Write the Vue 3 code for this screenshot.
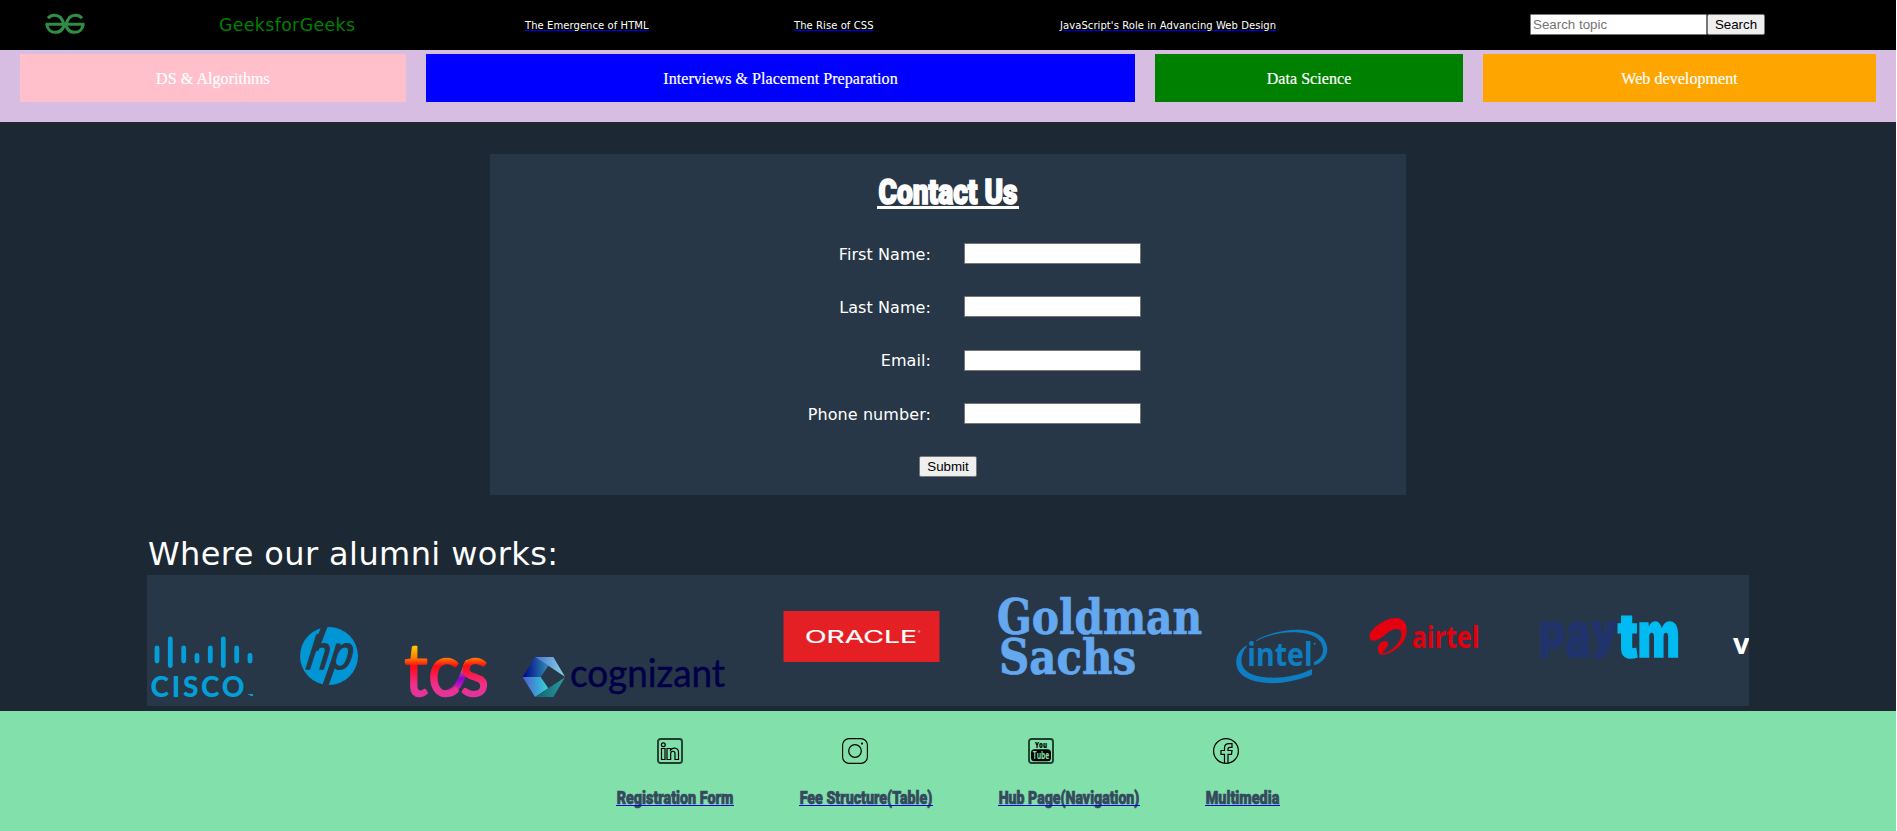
<script setup>
const articles = [
  { text: 'The Emergence of HTML', cls: 'a1' },
  { text: 'The Rise of CSS', cls: 'a2' },
  { text: "JavaScript's Role in Advancing Web Design", cls: 'a3' },
]
const categories = [
  { text: 'DS & Algorithms', cls: 'pink' },
  { text: 'Interviews & Placement Preparation', cls: 'blue' },
  { text: 'Data Science', cls: 'green' },
  { text: 'Web development', cls: 'orange' },
]
const fields = ['First Name:', 'Last Name:', 'Email:', 'Phone number:']
const links = [
  { text: 'Registration Form', width: 118 },
  { text: 'Fee Structure(Table)', width: 134 },
  { text: 'Hub Page(Navigation)', width: 142 },
  { text: 'Multimedia', width: 75 },
]
const ciscoBars = [
  [157, 648, 661], [170.3, 639, 665.5], [183.7, 648, 661], [197, 655.5, 661],
  [210.3, 648, 661], [223.3, 639, 665.5], [236.7, 648, 661], [250, 655.5, 661],
]
</script>

<template>
  <div class="page">
    <header class="top">
      <svg class="gfg" width="40" height="22" viewBox="0 0 40 22">
        <g fill="none" stroke="#2f8d46" stroke-width="3.1">
          <path d="M3 5.2C6 1.6 12 1.2 15.500 4.500C17.800 7 18.600 9.500 19.200 12C18 16.500 14.500 19.300 10.500 19.300C5.500 19.300 2.200 16 2 11.500" />
          <path d="M37 5.2C34 1.6 28 1.2 24.500 4.500C22.200 7 21.400 9.500 20.800 12C22 16.500 25.500 19.300 29.500 19.300C34.500 19.300 37.800 16 38 11.500" />
          <path d="M.5 11.300H39.500" />
        </g>
      </svg>
      <span class="brand">GeeksforGeeks</span>
      <a v-for="a in articles" :key="a.cls" class="article" :class="a.cls">{{ a.text }}</a>
      <form class="search" @submit.prevent>
        <input class="box" placeholder="Search topic" />
        <button class="btn">Search</button>
      </form>
    </header>

    <nav class="cats">
      <div v-for="c in categories" :key="c.cls" class="cat" :class="c.cls"><span>{{ c.text }}</span></div>
    </nav>

    <main>
      <form class="contact" @submit.prevent>
        <h1>
          <svg width="142" height="36" viewBox="0 0 142 36">
            <text class="heavy" x="1.500" y="29.500" font-size="34.500" textLength="139" lengthAdjust="spacingAndGlyphs" stroke="#fff" stroke-width="1.700">Contact Us</text>
            <rect y="32" width="142" height="3" />
          </svg>
        </h1>
        <div v-for="f in fields" :key="f" class="row">
          <label>{{ f }}</label><input class="box" />
        </div>
        <button class="btn submit">Submit</button>
      </form>

      <h2>Where our alumni works:</h2>
      <section class="strip">
        <svg width="133" height="131" viewBox="147 575 133 131">
          <g stroke="#049fd9" stroke-width="4.800" stroke-linecap="round">
            <path v-for="b in ciscoBars" :key="b[0]" :d="`M${b[0]} ${b[1]}V${b[2]}`" />
          </g>
          <text x="150.500" y="696.500" class="lato" font-weight="900" font-size="28" fill="#049fd9" textLength="94" lengthAdjust="spacing">CISCO</text>
          <path d="M247.500 694h5.500v2h-2z" fill="#049fd9" />
        </svg>
        <svg width="105" height="131" viewBox="280 575 105 131">
          <circle cx="329" cy="656" r="29" fill="#0096d6" />
          <g stroke="#283747" stroke-width="6"><path d="M325 625L315.500 650M333.500 663L324.500 688" /></g>
          <text transform="translate(305.500 669) skewX(-8)" font-size="47" font-style="italic" class="arial" fill="#283747" stroke="#283747" stroke-width="1.300" textLength="46" lengthAdjust="spacingAndGlyphs">hp</text>
        </svg>
        <svg width="120" height="131" viewBox="385 575 120 131">
          <defs>
            <linearGradient id="tcs" x1="0" y1="647" x2="0" y2="697" gradientUnits="userSpaceOnUse">
              <stop offset="0" stop-color="#ffc800" /><stop offset=".22" stop-color="#ff7a00" />
              <stop offset=".38" stop-color="#ff0a14" /><stop offset=".75" stop-color="#f0308a" /><stop offset="1" stop-color="#e0359c" />
            </linearGradient>
            <linearGradient id="rib" x1="0" y1="1" x2="0" y2="0">
              <stop offset="0" stop-color="#f0308a" /><stop offset=".5" stop-color="#8a00d8" /><stop offset="1" stop-color="#ffae00" />
            </linearGradient>
          </defs>
          <path d="M443 693.500C458 693 461 680 468 663" fill="none" stroke="url(#rib)" stroke-width="6.500" stroke-linecap="round" />
          <text x="404" y="696" class="lato" font-size="74" font-weight="400" fill="url(#tcs)" stroke="url(#tcs)" stroke-width="1.400" stroke-linejoin="round" textLength="85" lengthAdjust="spacingAndGlyphs">tcs</text>
        </svg>
        <svg width="255" height="131" viewBox="505 575 255 131">
          <defs>
            <linearGradient id="c1"><stop stop-color="#00008b" /><stop offset="1" stop-color="#2e8fb0" /></linearGradient>
            <linearGradient id="c2"><stop stop-color="#4a6fd0" /><stop offset="1" stop-color="#8bd6e4" /></linearGradient>
            <linearGradient id="c3"><stop stop-color="#4a5fd0" /><stop offset="1" stop-color="#35d2d8" /></linearGradient>
            <linearGradient id="c4"><stop stop-color="#17606f" /><stop offset="1" stop-color="#229ba0" /></linearGradient>
          </defs>
          <g transform="translate(500 600) scale(.3333)">
            <path d="M68 231L105 171L145 197L122 231z" fill="url(#c1)" />
            <path d="M105 171H160L195 230L145 197z" fill="url(#c2)" />
            <path d="M68 231H122L145 265L105 291z" fill="url(#c3)" />
            <path d="M105 291L145 265L195 232L160 291z" fill="url(#c4)" />
          </g>
          <text x="570" y="687" class="lato" font-size="39" font-weight="400" fill="#000048" stroke="#000048" stroke-width=".5" textLength="155" lengthAdjust="spacingAndGlyphs">cognizant</text>
        </svg>
        <svg width="200" height="131" viewBox="760 575 200 131">
          <rect x="783.500" y="611" width="156" height="51" fill="#e42024" />
          <text x="805" y="643" class="inter" font-size="17.500" font-weight="400" fill="#fff" stroke="#fff" stroke-width=".2" textLength="112" lengthAdjust="spacingAndGlyphs">ORACLE</text>
          <circle cx="919" cy="631.500" r="1.200" fill="#f08a8c" />
        </svg>
        <svg width="255" height="131" viewBox="960 575 255 131">
          <g class="didone" fill="#64a8f0" stroke="#64a8f0" stroke-width=".7" font-size="48" font-weight="700">
            <text x="997" y="634" textLength="205" lengthAdjust="spacingAndGlyphs">Goldman</text>
            <text x="999" y="673.500" textLength="137" lengthAdjust="spacingAndGlyphs">Sachs</text>
          </g>
        </svg>
        <svg width="135" height="131" viewBox="1215 575 135 131">
          <g transform="translate(960 570) scale(.3333)" fill="#0f7dc2">
            <path d="M888 211C960 170 1095 160 1102 235C1103 262 1085 280 1062 286V276C1080 268 1090 255 1089 237C1085 175 960 175 890 213z" />
            <path d="M860 226C838 240 828 258 829 280C832 330 900 342 950 339C990 337 1030 325 1056 314V297C1020 315 980 323 940 323C895 322 850 312 845 278C843 260 848 243 860 230z" />
            <text x="862" y="287" class="open" font-size="96" font-weight="700" textLength="196" lengthAdjust="spacingAndGlyphs">intel</text>
            <circle cx="1064" cy="221" r="3" />
          </g>
        </svg>
        <svg width="160" height="131" viewBox="1350 575 160 131">
          <g transform="translate(1340 570) scale(.3333)" fill="#e4000f">
            <path d="M90 205C80 180 140 140 170 144C200 148 205 175 197 200C185 235 140 258 122 254C108 248 112 220 130 213C145 212 150 222 140 232C135 240 128 245 128 250C150 250 185 215 185 192C183 172 160 172 135 195C118 210 95 220 90 205z" />
            <text x="215" y="233" class="open" font-size="91" font-weight="700" textLength="203" lengthAdjust="spacingAndGlyphs">airtel</text>
          </g>
        </svg>
        <svg width="200" height="131" viewBox="1510 575 200 131">
          <g transform="translate(1340 570) scale(.3333)" class="inter" font-weight="900" fill="#20336b" stroke="#20336b" stroke-width="5">
            <text x="598" y="235" font-size="141" textLength="76" lengthAdjust="spacingAndGlyphs">p</text>
            <text x="676" y="262" font-size="188" textLength="77" lengthAdjust="spacingAndGlyphs">a</text>
            <text x="755" y="235" font-size="141" textLength="76" lengthAdjust="spacingAndGlyphs">y</text>
            <g fill="#00baf2" stroke="#00baf2">
              <text x="833" y="262" font-size="180" textLength="60" lengthAdjust="spacingAndGlyphs">t</text>
              <text x="893" y="262" font-size="188" textLength="126" lengthAdjust="spacingAndGlyphs">m</text>
            </g>
          </g>
        </svg>
        <svg width="39" height="131" viewBox="1710 575 39 131">
          <text x="1733" y="654" class="open" font-size="29" font-weight="700" fill="#fff">v</text>
        </svg>
      </section>
    </main>

    <footer>
      <div class="social">
        <svg width="26" height="26" viewBox="0 0 26 26">
          <rect x="1" y="1" width="24" height="24" rx="2.500" fill="none" stroke="#1f4030" stroke-width="1.900" />
          <g fill="none" stroke="#000" stroke-width="1.200">
            <circle cx="6.300" cy="6.800" r="1.900" />
            <path d="M4.500 10.500H8V21.500H4.500zM10 10.500H13.500V12C16 9 21.500 9.500 21.500 14.500V21.500H18V15.500C18 12.500 13.700 12.500 13.700 15.500V21.500H10z" />
          </g>
        </svg>
        <svg width="26" height="26" viewBox="0 0 26 26" fill="none" stroke="#000">
          <rect x=".6" y=".6" width="24.800" height="24.800" rx="6.500" stroke-width="1.100" />
          <circle cx="13" cy="13" r="6.300" stroke-width="1.200" />
          <circle cx="20" cy="5.600" r="1.100" fill="#000" stroke="none" />
        </svg>
        <svg width="26" height="26" viewBox="0 0 26 26">
          <rect x="1" y="1" width="24" height="24" rx="2.500" fill="none" stroke="#1f4030" stroke-width="1.900" />
          <rect x="3" y="11.300" width="20" height="12" rx="3.500" />
          <text x="7" y="9.800" class="open" font-size="8.800" font-weight="800" textLength="12" lengthAdjust="spacingAndGlyphs">You</text>
          <text x="4.800" y="21" class="open" font-size="10.500" font-weight="700" fill="#82e0aa" textLength="16.500" lengthAdjust="spacingAndGlyphs">Tube</text>
        </svg>
        <svg width="26" height="26" viewBox="0 0 26 26" fill="none" stroke="#000" stroke-width="1.200">
          <circle cx="13" cy="13" r="12.400" />
          <path d="M11.500 25.300V16.300H8V12.500H11.500V10C11.500 7 13.500 5.700 16 5.700H19V9.300H17C15.600 9.300 15 9.800 15 11V12.500H19L18.500 16.300H15V25.300" />
        </svg>
      </div>
      <div class="links">
        <a v-for="l in links" :key="l.text">
          <svg :width="l.width" height="20" :viewBox="`0 0 ${l.width} 20`">
            <text class="heavy" x=".7" y="14.800" font-size="17.500" :textLength="l.width - 1.400" lengthAdjust="spacingAndGlyphs" fill="#34495e" stroke="#34495e" stroke-width=".7">{{ l.text }}</text>
            <rect y="16" :width="l.width" height="1" fill="#0000ee" />
          </svg>
        </a>
      </div>
    </footer>
  </div>
</template>

<style>
body { margin: 0; background: #fff; overflow: hidden; }
</style>

<style scoped>
.page { width: 1896px; height: 831px; display: flex; flex-direction: column; background: #1c2833; font-family: "DejaVu Sans", Verdana, sans-serif; color: #fff; }
svg { display: block; flex: none; overflow: visible; }
.top { height: 50px; background: #000; display: flex; align-items: center; box-sizing: border-box; padding-left: 45px; white-space: nowrap; }
.gfg { margin-top: -2px; }
.brand { margin-left: 134px; width: 306px; color: #008000; font-size: 17.300px; letter-spacing: .4px; }
.article { font-size: 10px; letter-spacing: .07px; text-decoration: underline; text-decoration-color: #0000ee; }
.a1 { width: 269px; }
.a2 { width: 266px; }
.a3 { width: 470px; }
.search { display: flex; margin-top: -1px; }
.box { box-sizing: border-box; width: 177px; height: 21px; border: 1px solid #767676; border-radius: 1px; padding: 1px 2px; font: 13.333px "Liberation Sans", Arial, sans-serif; background: #fff; outline: none; }
.box::placeholder { color: #757575; opacity: 1; }
.btn { box-sizing: border-box; width: 59px; height: 21px; border: 1px solid #767676; border-radius: 2px; padding: 0; font: 13.333px "Liberation Sans", Arial, sans-serif; background: #efefef; color: #000; }
.search .btn { width: 58px; }
.cats { height: 72px; box-sizing: border-box; background: #d7bde2; padding: 4px 20px 20px; display: grid; grid-template-columns: 386fr 709fr 308fr 393fr; column-gap: 20px; }
.cat { display: flex; align-items: center; justify-content: center; font-family: "Liberation Serif", serif; font-size: 16px; white-space: nowrap; letter-spacing: .06px; -webkit-text-stroke: .2px #fff; padding-top: 1px; }
.pink { background: #ffc0cb; }
.blue { background: #00f; }
.green { background: #008000; }
.orange { background: #ffa500; }
main { height: 589px; box-sizing: border-box; padding-top: 32px; }
.contact { width: 916px; height: 341px; margin: 0 auto; margin-left: 490px; background: #283747; display: flex; flex-direction: column; align-items: center; box-sizing: border-box; padding-top: 20px; }
h1 { margin: 0 0 24px; height: 36px; fill: #fff; }
.heavy { font-family: Roboto, "Liberation Sans", sans-serif; font-weight: 900; }
.row { height: 53.300px; width: 100%; display: grid; grid-template-columns: 440px 177px; column-gap: 34px; align-items: center; box-sizing: border-box; padding-bottom: 14px; }
.row label { text-align: right; font-size: 16px; line-height: 20px; letter-spacing: .08px; padding-top: 2px; margin-right: -1px; }
.submit { width: 58px; margin-top: 9px; }
h2 { margin: 0 0 0 148px; padding-top: 37px; height: 43px; line-height: 44px; font-size: 32px; font-weight: 400; letter-spacing: .4px; }
.strip { margin-left: 147px; width: 1602px; height: 131px; background: #283747; display: flex; overflow: hidden; }
.inter { font-family: Inter, sans-serif; }
.lato { font-family: Lato, sans-serif; }
.open { font-family: "Open Sans", sans-serif; }
.arial { font-family: "Liberation Sans", Arial, sans-serif; }
.didone { font-family: "DejaVu Serif Condensed", "DejaVu Serif", serif; }
footer { height: 120px; box-sizing: border-box; background: #82e0aa; padding-top: 27px; }
.social { display: flex; justify-content: center; gap: 159.300px; }
.links { display: flex; justify-content: center; gap: 65px; margin-top: 25px; }
</style>
